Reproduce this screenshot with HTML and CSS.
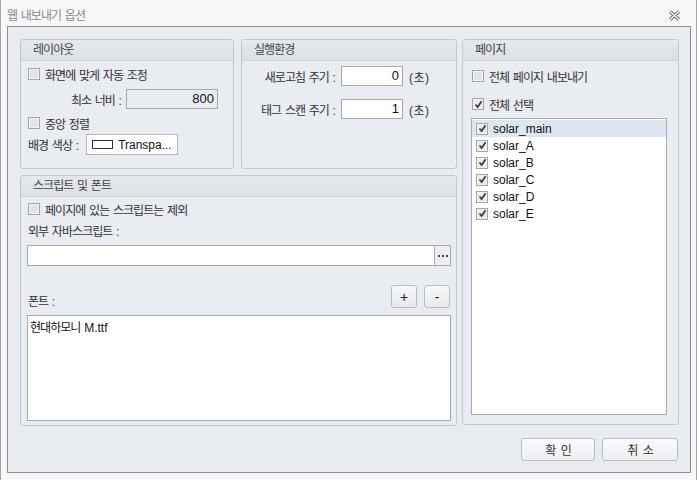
FILE: index.html
```html
<!DOCTYPE html>
<html lang="ko">
<head>
<meta charset="UTF-8">
<title>웹 내보내기 옵션</title>
<link rel="stylesheet" href="styles.css">
</head>
<body>

<div class="title-bar">
  <span class="title">웹 내보내기 옵션</span>
  <svg class="close" width="13" height="11" viewBox="0 0 13 11">
    <path d="M2 1.5 L11 9.5 M11 1.5 L2 9.5" stroke="#6b6b6b" stroke-width="3.4" fill="none"/>
    <path d="M2 1.5 L11 9.5 M11 1.5 L2 9.5" stroke="#ffffff" stroke-width="1.3" fill="none"/>
  </svg>
</div>

<div class="dialog">
  <div class="panels">

    <section class="group layout-group">
      <div class="group-head">레이아웃</div>
      <div class="group-body">
        <label class="check"><span class="box"></span>화면에 맞게 자동 조정</label>
        <div class="field min-row">
          <span class="field-label">최소 너비 :</span>
          <span class="input disabled">800</span>
        </div>
        <label class="check center-row"><span class="box"></span>중앙 정렬</label>
        <div class="field color-row">
          <span>배경 색상 :</span>
          <span class="color-btn"><span class="swatch"></span>Transpa...</span>
        </div>
      </div>
    </section>

    <section class="group run-group">
      <div class="group-head">실행환경</div>
      <div class="group-body">
        <div class="field">
          <span class="field-label">새로고침 주기 :</span>
          <span class="input">0</span>
          <span class="unit">(초)</span>
        </div>
        <div class="field scan-row">
          <span class="field-label">태그 스캔 주기 :</span>
          <span class="input">1</span>
          <span class="unit">(초)</span>
        </div>
      </div>
    </section>

    <section class="group page-group">
      <div class="group-head">페이지</div>
      <div class="group-body">
        <label class="check"><span class="box"></span>전체 페이지 내보내기</label>
        <label class="check select-all"><span class="box checked"><svg width="9" height="9" viewBox="0 0 9 9"><path d="M1.5 4.5 L3.6 7 L7.6 1.2" stroke="#3a3a3a" stroke-width="1.7" fill="none"/></svg></span>전체 선택</label>
        <ul class="page-list">
          <li class="selected"><span class="box checked"><svg width="9" height="9" viewBox="0 0 9 9"><path d="M1.5 4.5 L3.6 7 L7.6 1.2" stroke="#3a3a3a" stroke-width="1.7" fill="none"/></svg></span>solar_main</li>
          <li><span class="box checked"><svg width="9" height="9" viewBox="0 0 9 9"><path d="M1.5 4.5 L3.6 7 L7.6 1.2" stroke="#3a3a3a" stroke-width="1.7" fill="none"/></svg></span>solar_A</li>
          <li><span class="box checked"><svg width="9" height="9" viewBox="0 0 9 9"><path d="M1.5 4.5 L3.6 7 L7.6 1.2" stroke="#3a3a3a" stroke-width="1.7" fill="none"/></svg></span>solar_B</li>
          <li><span class="box checked"><svg width="9" height="9" viewBox="0 0 9 9"><path d="M1.5 4.5 L3.6 7 L7.6 1.2" stroke="#3a3a3a" stroke-width="1.7" fill="none"/></svg></span>solar_C</li>
          <li><span class="box checked"><svg width="9" height="9" viewBox="0 0 9 9"><path d="M1.5 4.5 L3.6 7 L7.6 1.2" stroke="#3a3a3a" stroke-width="1.7" fill="none"/></svg></span>solar_D</li>
          <li><span class="box checked"><svg width="9" height="9" viewBox="0 0 9 9"><path d="M1.5 4.5 L3.6 7 L7.6 1.2" stroke="#3a3a3a" stroke-width="1.7" fill="none"/></svg></span>solar_E</li>
        </ul>
      </div>
    </section>

    <section class="group script-group">
      <div class="group-head">스크립트 및 폰트</div>
      <div class="group-body">
        <label class="check"><span class="box"></span>페이지에 있는 스크립트는 제외</label>
        <div class="plain-label">외부 자바스크립트 :</div>
        <div class="path-input">
          <span class="path-text"></span>
          <span class="browse"><i></i><i></i><i></i></span>
        </div>
        <div class="font-bar">
          <span>폰트 :</span>
          <span class="tools">
            <button class="small-btn">+</button>
            <button class="small-btn">-</button>
          </span>
        </div>
        <div class="font-list">현대하모니 <span class="latin">M.ttf</span></div>
      </div>
    </section>

  </div>

  <div class="actions">
    <button class="action ok">확 인</button>
    <button class="action cancel">취 소</button>
  </div>
</div>

</body>
</html>
```

FILE: styles.css
```css
* {
  box-sizing: border-box;
}

html, body {
  margin: 0;
}

/* hangul runs a little narrow, like the system dialog font */
body {
  width: 697px;
  height: 480px;
  overflow: hidden;
  background: #f7f7f7;
  border-left: 1px solid #a6a6a6;
  border-right: 1px solid #a6a6a6;
  font-family: "Liberation Sans", "Noto Sans CJK KR", sans-serif;
  font-size: 12px;
  letter-spacing: -0.95px;
  word-spacing: 1.3px;
  color: #333;
}

/* window caption */
.title-bar {
  height: 26px;
  display: flex;
  align-items: center;
  justify-content: space-between;
  padding: 3px 15px 0 6px;
}

.title {
  color: #8a8a8a;
}

.close {
  display: block;
  margin-top: 1px;
}

/* dialog frame */
.dialog {
  width: 684px;
  height: 447px;
  margin-left: 6px;
  border: 1px solid #8d9095;
  background: #e8ebef;
  padding: 12px 12px 0 12px;
}

.panels {
  display: grid;
  grid-template-columns: 214px 216px 215px;
  grid-template-rows: 130px 251px;
  column-gap: 7px;
  row-gap: 6px;
}

.layout-group { grid-column: 1; grid-row: 1; }
.run-group { grid-column: 2; grid-row: 1; }
.script-group { grid-column: 1 / 3; grid-row: 2; }
.page-group {
  grid-column: 3;
  grid-row: 1 / 3;
  height: 386px;
  margin-left: -2px;
}

.group {
  display: flex;
  flex-direction: column;
  border: 1px solid #c3c7cc;
  border-radius: 3px;
  background: #e9ecf0;
}

.group-head {
  height: 21px;
  line-height: 20px;
  padding-left: 12px;
  background: linear-gradient(#e6e9ec, #dcdfe3);
  border-bottom: 1px solid #d0d3d7;
  color: #444;
}

.group-body {
  display: flex;
  flex-direction: column;
  flex: 1;
}

/* checkboxes */
.check {
  display: flex;
  align-items: center;
  height: 12px;
  gap: 5px;
  white-space: nowrap;
}

.box {
  display: inline-flex;
  align-items: center;
  justify-content: center;
  width: 12px;
  height: 12px;
  flex: none;
  border: 1px solid #a3a5a8;
  background: #e2e3e5;
  box-shadow: inset 0 0 0 1px #f3f3f3;
}

.box.checked {
  background: #ebebeb;
}

.box svg {
  display: block;
}

/* label + input rows */
.field {
  display: flex;
  align-items: center;
  height: 20px;
}

.field-label {
  text-align: right;
  white-space: nowrap;
}

.input {
  height: 20px;
  line-height: 18px;
  border: 1px solid #a7abb0;
  background: #fff;
  text-align: right;
  padding-right: 3px;
  font-size: 13px;
  letter-spacing: 0;
  color: #111;
}

.input.disabled {
  background: #e9ecef;
}

.unit {
  margin-left: 6px;
  letter-spacing: 0.5px;
}

/* 레이아웃 */
.layout-group .group-body {
  padding: 7px 0 0 7px;
}

.min-row {
  margin-top: 9px;
}

.min-row .field-label {
  width: 93px;
}

.min-row .input {
  width: 92px;
  margin-left: 5px;
}

.center-row {
  margin-top: 8px;
}

.color-row {
  margin-top: 5px;
  height: 21px;
}

.color-btn {
  display: flex;
  align-items: center;
  width: 92px;
  height: 21px;
  margin-left: 8px;
  border: 1px solid #b3b5b8;
  background: #fff;
  padding-left: 5px;
  font-size: 12px;
  letter-spacing: 0;
  color: #111;
}

.swatch {
  width: 21px;
  height: 9px;
  border: 1px solid #333;
  margin-right: 5px;
}

/* 실행환경 */
.run-group .group-body {
  padding: 5px 0 0 8px;
}

.run-group .field-label {
  width: 85px;
}

.run-group .input {
  width: 62px;
  margin-left: 6px;
}

.scan-row {
  margin-top: 13px;
}

/* 페이지 */
.page-group .group-body {
  padding: 9px 9px 9px 9px;
}

.select-all {
  margin-top: 16px;
}

.page-list {
  list-style: none;
  margin: 8px 0 0 -1px;
  padding: 1px 0 0 0;
  width: 196px;
  flex: 1;
  border: 1px solid #a8abb0;
  background: #fff;
}

.page-list li {
  display: flex;
  align-items: center;
  gap: 5px;
  height: 17px;
  padding-left: 4px;
  font-size: 12px;
  letter-spacing: 0;
  color: #111;
}

.page-list li.selected {
  background: #dde7f2;
}

/* 스크립트 및 폰트 */
.script-group .group-body {
  padding: 6px 5px 4px 6px;
}

.script-group .check {
  margin-left: 1px;
}

.plain-label {
  margin-top: 9px;
  height: 16px;
  line-height: 16px;
  padding-left: 1px;
}

.path-input {
  display: flex;
  height: 21px;
  margin-top: 5px;
  border: 1px solid #a7abb0;
  background: #fff;
}

.path-text {
  flex: 1;
}

.browse {
  display: flex;
  align-items: center;
  justify-content: center;
  gap: 2px;
  width: 16px;
  border-left: 1px solid #a7abb0;
  background: #eceef1;
}

.browse i {
  width: 2px;
  height: 2px;
  background: #4a4a4a;
}

.font-bar {
  display: flex;
  justify-content: space-between;
  align-items: flex-end;
  margin-top: 19px;
  height: 23px;
  padding-left: 1px;
}

.font-bar > span:first-child {
  margin-bottom: -1px;
}

.tools {
  display: flex;
  gap: 7px;
  margin-right: 1px;
}

.small-btn {
  width: 26px;
  height: 23px;
  padding: 0;
  border: 1px solid #b9bcc1;
  border-radius: 3px;
  background: linear-gradient(#f7f8fa, #e7e9ec);
  font-family: "Liberation Sans", sans-serif;
  font-size: 14px;
  color: #222;
}

.font-list {
  flex: 1;
  margin-top: 7px;
  border: 1px solid #a7abb0;
  background: #fff;
  padding: 2px 2px;
  color: #111;
}

.latin {
  letter-spacing: 0;
}

/* 확인 / 취소 */
.actions {
  display: flex;
  justify-content: flex-end;
  gap: 7px;
  margin-top: 12px;
}

.action {
  height: 23px;
  padding: 0;
  border: 1px solid #babdc1;
  border-radius: 3px;
  background: linear-gradient(#fbfbfc, #eceef0);
  font-family: "Liberation Sans", "Noto Sans CJK KR", sans-serif;
  font-size: 12px;
  letter-spacing: -0.95px;
  word-spacing: 3px;
  color: #333;
}

.ok {
  width: 74px;
}

.cancel {
  width: 76px;
}
```
